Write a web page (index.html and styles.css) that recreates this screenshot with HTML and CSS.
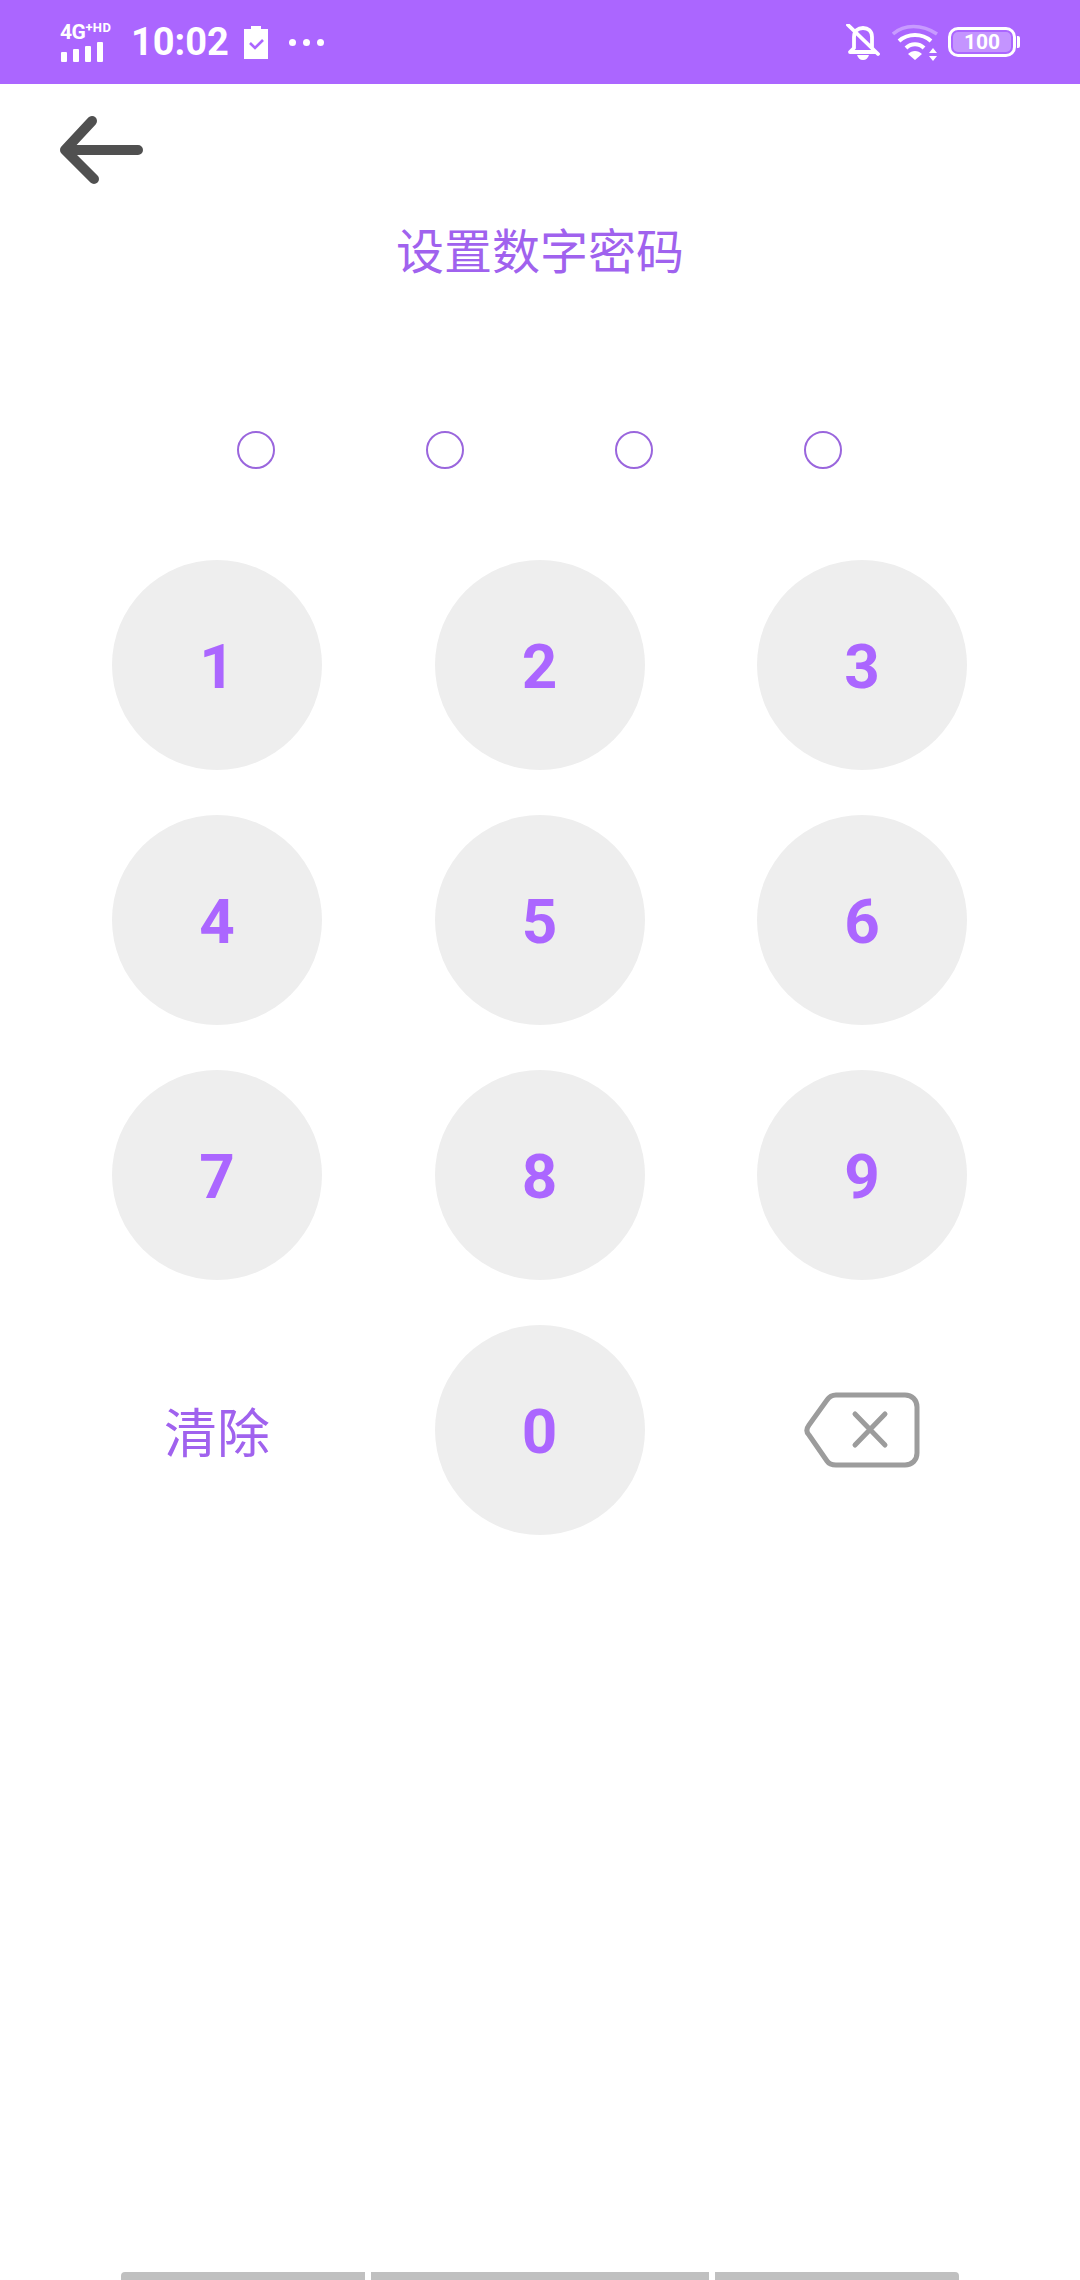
FILE: index.html
```html
<!DOCTYPE html>
<html lang="zh">
<head>
<meta charset="utf-8">
<title>设置数字密码</title>
<link rel="stylesheet" href="styles.css">
</head>
<body>
<div class="screen">
  <header class="status">
    <div class="status-left">
      <div class="signal">
        <div class="net"><span class="net-4g">4G</span><span class="net-hd">+HD</span></div>
        <div class="bars"><i class="b1"></i><i class="b2"></i><i class="b3"></i><i class="b4"></i></div>
      </div>
      <span class="time">10:02</span>
      <svg class="clip" width="24" height="34" viewBox="0 0 24 34"><path fill="#fff" d="M0 4h7V1h10v3h7v30H0z"/><path fill="none" stroke="#ab66ff" stroke-width="2.6" d="M6 18l5 5 8-8"/></svg>
      <div class="dots"><i></i><i></i><i></i></div>
    </div>
    <div class="status-right">
      <svg class="bell" width="34" height="36" viewBox="0 0 34 36"><path fill="none" stroke="#fff" stroke-width="3.8" stroke-linecap="round" stroke-linejoin="round" d="M8 13c0-6 4-9 9-9s9 3 9 9v11l3 4H4l4-4zM2 1l30 29"/><path fill="#fff" d="M11 31h12c-1 3-3 5-6 5s-5-2-6-5z"/></svg>
      <svg class="wifi" width="48" height="38" viewBox="0 0 48 38"><path fill="none" stroke="#fff" stroke-opacity=".35" stroke-width="3.6" d="M1 11C12 1 30 1 45 11"/><path fill="none" stroke="#fff" stroke-width="4" d="M7 18c9-8 23-8 32 0"/><path fill="none" stroke="#fff" stroke-width="4" d="M14 25c5-5 13-5 18 0"/><path fill="#fff" d="M16 31c4-4 10-4 14 0l-7 6zM37 30l4-5 4 5zM37 33h8l-4 5z"/></svg>
      <div class="battery"><div class="battery-body"><span class="battery-level">100</span></div><i class="battery-tip"></i></div>
    </div>
  </header>

  <main class="content">
    <div class="topbar">
      <svg width="84" height="68" viewBox="0 0 84 68"><path fill="none" stroke="#505050" stroke-width="10" stroke-linecap="round" stroke-linejoin="round" d="M79 34H6M33 5L6 34l29 29"/></svg>
    </div>
    <h1 class="title">设置数字密码</h1>
    <div class="pin"><i></i><i></i><i></i><i></i></div>
    <div class="keypad">
      <div class="key">1</div>
      <div class="key">2</div>
      <div class="key">3</div>
      <div class="key">4</div>
      <div class="key">5</div>
      <div class="key">6</div>
      <div class="key">7</div>
      <div class="key">8</div>
      <div class="key">9</div>
      <div class="action">清除</div>
      <div class="key">0</div>
      <div class="action">
        <svg width="116" height="76" viewBox="0 0 116 76"><path fill="none" stroke="#9c9c9c" stroke-width="5" stroke-linejoin="round" d="M32 3h69c7 0 12 5 12 12v46c0 7-5 12-12 12H32c-4 0-7-1-9-4L5 43c-3-3-3-6 0-10L23 8c2-3 5-5 9-5z"/><path fill="none" stroke="#9c9c9c" stroke-width="5" stroke-linecap="round" d="M51 22l30 31M81 22L51 53"/></svg>
      </div>
    </div>
  </main>

  <footer class="nav"><i class="seg-a"></i><i class="seg-b"></i><i class="seg-c"></i></footer>
</div>
</body>
</html>
```

FILE: styles.css
```css
* { box-sizing: border-box; margin: 0; padding: 0; }
html, body { width: 1080px; height: 2280px; background: #fff; overflow: hidden; }
body { font-family: Roboto, "Noto Sans CJK SC", sans-serif; }
i { display: block; }
.screen { width: 1080px; height: 2280px; display: flex; flex-direction: column; }

.status { height: 84px; flex: none; background: #ab66ff; color: #fff; display: flex; justify-content: space-between; align-items: center; padding: 0 60px 0 60px; }
.status-left, .status-right { display: flex; align-items: center; }
.signal { width: 58px; display: flex; flex-direction: column; gap: 2px; }
.net { display: flex; align-items: flex-start; font-weight: 700; line-height: 20px; height: 18px; white-space: nowrap; }
.net-4g { font-size: 21px; letter-spacing: -.5px; }
.net-hd { font-size: 13px; line-height: 12px; letter-spacing: .4px; }
.bars { display: flex; align-items: flex-end; gap: 6px; height: 20px; padding-left: 1px; }
.bars i { width: 6px; background: #fff; border-radius: 1px; }
.b1 { height: 10px; } .b2 { height: 13px; } .b3 { height: 16px; } .b4 { height: 20px; }
.time { font-size: 38px; font-weight: 700; margin-left: 13px; line-height: 44px; }
.clip { margin-left: 15px; }
.dots { display: flex; gap: 7px; margin-left: 21px; }
.dots i { width: 7px; height: 7px; background: #fff; border-radius: 50%; }
.status-right .wifi { margin-left: 12px; }
.battery { display: flex; align-items: center; margin-left: 8px; }
.battery-body { width: 68px; height: 30px; border: 3px solid #fff; border-radius: 10px; padding: 2px; display: flex; }
.battery-level { flex: 1; background: rgba(255,255,255,.3); border-radius: 5px; font-size: 21px; font-weight: 700; line-height: 20px; text-align: center; }
.battery-tip { width: 3px; height: 12px; background: #fff; border-radius: 0 2px 2px 0; margin-left: 1px; }

.content { flex: 1; display: flex; flex-direction: column; align-items: center; }
.topbar { align-self: flex-start; padding: 32px 0 0 59px; height: 122px; }
.title { font-family: "Noto Sans CJK SC", sans-serif; font-size: 48px; font-weight: 400; line-height: 60px; color: #a062ee; margin-top: 12px; }
.pin { display: flex; gap: 151px; margin-top: 153px; margin-right: 1px; }
.pin i { width: 38px; height: 38px; border: 2px solid #9a66dd; border-radius: 50%; }
.keypad { display: grid; grid-template-columns: repeat(3, 210px); grid-auto-rows: 210px; column-gap: 112.5px; row-gap: 45px; margin-top: 91px; margin-right: 1px; }
.key, .action { display: flex; align-items: center; justify-content: center; color: #ab66ff; }
.key { background: #eeeeee; border-radius: 50%; font-size: 62px; font-weight: 700; padding-top: 2px; }
.action { font-family: "Noto Sans CJK SC", sans-serif; font-size: 53px; font-weight: 400; color: #a062ee; }

.nav { height: 8px; flex: none; display: flex; gap: 6px; padding-left: 121px; }
.nav i { background: #c0c0c0; height: 8px; }
.seg-a { width: 244px; border-radius: 4px 0 0 0; }
.seg-b { width: 338px; }
.seg-c { width: 244px; border-radius: 0 4px 0 0; }
```
